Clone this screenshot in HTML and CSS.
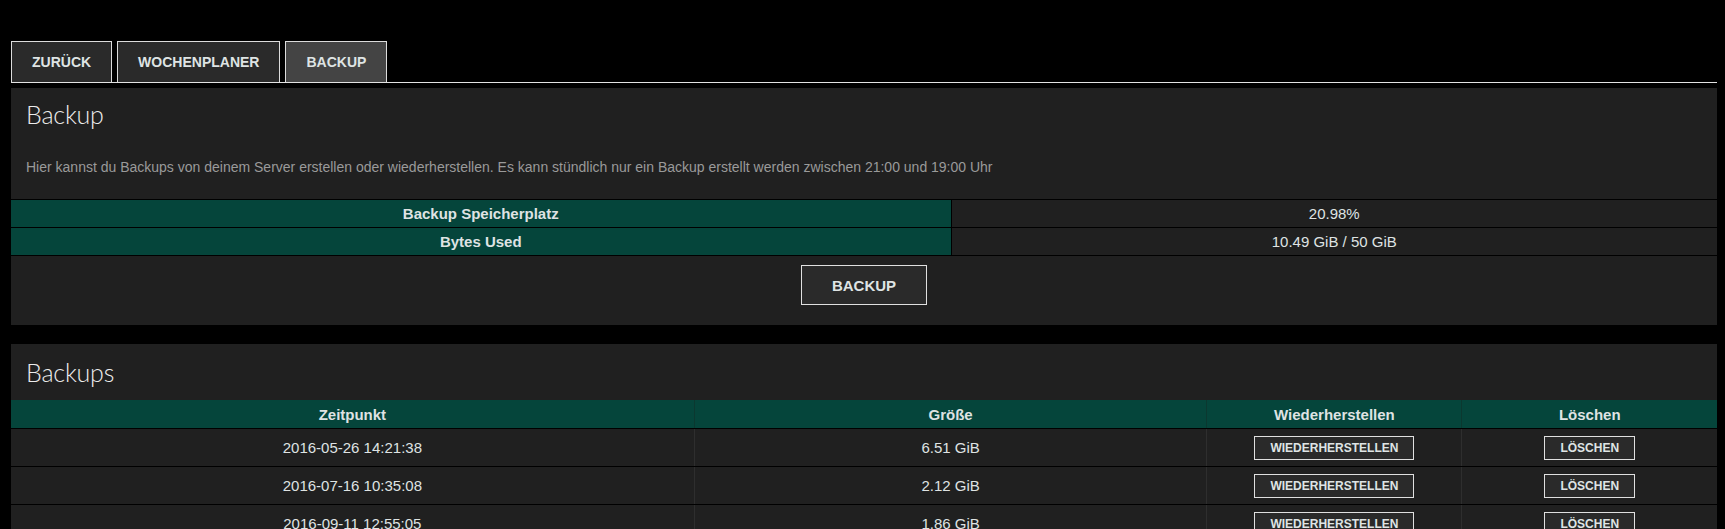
FILE: index.html
```html
<!DOCTYPE html>
<html lang="de">
<head>
<meta charset="utf-8">
<title>Backup</title>
<link rel="stylesheet" href="styles.css">
</head>
<body>
<div class="page">
  <nav class="tabs">
    <a class="tab">ZURÜCK</a>
    <a class="tab">WOCHENPLANER</a>
    <a class="tab active">BACKUP</a>
  </nav>

  <section class="panel">
    <h2 class="panel-title">Backup</h2>
    <p class="desc">Hier kannst du Backups von deinem Server erstellen oder wiederherstellen. Es kann stündlich nur ein Backup erstellt werden zwischen 21:00 und 19:00 Uhr</p>
    <table class="info">
      <tr><th>Backup Speicherplatz</th><td>20.98%</td></tr>
      <tr><th>Bytes Used</th><td>10.49 GiB / 50 GiB</td></tr>
    </table>
    <div class="actions"><button class="btn btn-lg">BACKUP</button></div>
  </section>

  <section class="panel panel-list">
    <h2 class="panel-title">Backups</h2>
    <table class="list">
      <colgroup><col class="c1"><col class="c2"><col class="c3"><col class="c4"></colgroup>
      <thead>
        <tr><th>Zeitpunkt</th><th>Größe</th><th>Wiederherstellen</th><th>Löschen</th></tr>
      </thead>
      <tbody>
        <tr><td>2016-05-26 14:21:38</td><td>6.51 GiB</td><td><button class="btn btn-sm">WIEDERHERSTELLEN</button></td><td><button class="btn btn-sm">LÖSCHEN</button></td></tr>
        <tr><td>2016-07-16 10:35:08</td><td>2.12 GiB</td><td><button class="btn btn-sm">WIEDERHERSTELLEN</button></td><td><button class="btn btn-sm">LÖSCHEN</button></td></tr>
        <tr><td>2016-09-11 12:55:05</td><td>1.86 GiB</td><td><button class="btn btn-sm">WIEDERHERSTELLEN</button></td><td><button class="btn btn-sm">LÖSCHEN</button></td></tr>
      </tbody>
    </table>
  </section>
</div>
</body>
</html>
```

FILE: styles.css
```css
html, body {
  margin: 0;
  padding: 0;
  background: #000;
}
body {
  font-family: "Liberation Sans", Arial, sans-serif;
  color: #dfe3e3;
  overflow: hidden;
}
.page {
  padding: 41px 8px 0 11px;
}
.tabs {
  display: flex;
  gap: 5.5px;
  border-bottom: 1px solid #e2e2e2;
  height: 41px;
}
.tab {
  display: flex;
  align-items: center;
  box-sizing: border-box;
  height: 41px;
  padding: 0 19.5px 0 20px;
  background: #2a2a2a;
  border: 1px solid #dcdcdc;
  border-bottom: none;
  font-weight: bold;
  font-size: 14px;
  color: #dfe4e4;
}
.tab.active {
  background: #444;
}
.panel {
  margin-top: 5px;
  background: #202020;
}
.panel-title {
  margin: 0;
  padding: 11px 15px 0 15px;
  font-family: Lato, "Open Sans", sans-serif;
  font-weight: 300;
  font-size: 25px;
  line-height: 30px;
  color: #ececec;
  letter-spacing: -0.2px;
}
.desc {
  margin: 0;
  padding: 29px 15px 0 15px;
  font-size: 14px;
  line-height: 18px;
  color: #9a9a9a;
}
table {
  width: 100%;
  border-collapse: collapse;
}
.info {
  margin-top: 23px;
}
.info th, .info td {
  height: 27px;
  padding: 0;
  border: 1px solid #000;
  border-left: none;
  border-right: none;
  text-align: center;
  font-size: 15px;
}
.info th {
  width: 55.1%;
  background: #05453b;
  font-weight: bold;
  border-right: 1px solid #000;
}
.info td {
  background: #202020;
}
.actions {
  display: flex;
  justify-content: center;
  padding: 9px 0 20px;
}
.btn {
  box-sizing: border-box;
  background: #2a2a2a;
  border: 1px solid #e0e0e0;
  color: #dfe4e4;
  font-family: "Liberation Sans", Arial, sans-serif;
  font-weight: bold;
  cursor: pointer;
}
.btn-lg {
  width: 126px;
  height: 40px;
  font-size: 15px;
}
.btn-sm {
  height: 24px;
  padding: 0 15px;
  font-size: 12px;
}
.panel-list {
  margin-top: 19px;
  padding-bottom: 40px;
}
.panel-list .panel-title {
  padding-top: 13px;
  padding-bottom: 13px;
}
.list .c1 { width: 40.05%; }
.list .c2 { width: 30.05%; }
.list .c3 { width: 14.95%; }
.list .c4 { width: 14.95%; }
.list th {
  height: 28px;
  padding: 0;
  background: #05453b;
  font-size: 15px;
  font-weight: bold;
  text-align: center;
  border-bottom: 1px solid #000;
  border-left: 1px solid #0b3830;
}
.list th:first-child, .list td:first-child {
  border-left: none;
}
.list td {
  height: 37px;
  padding: 0;
  text-align: center;
  font-size: 15px;
  border-bottom: 1px solid #000;
  border-left: 1px solid #2e2e2e;
}
```
